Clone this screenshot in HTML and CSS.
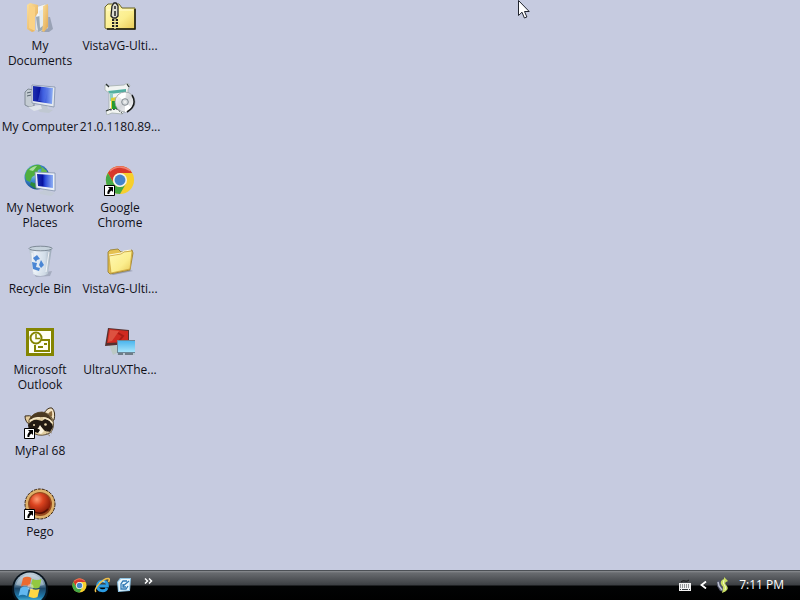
FILE: index.html
```
<!DOCTYPE html>
<html lang="en">
<head>
    <meta charset="UTF-8">
    <meta name="viewport" content="width=device-width, initial-scale=1.0">
    <title>Desktop</title>
    <link rel="stylesheet" href="styles.css">
</head>
<body>
    <!-- shared gradients and the shapes used more than once -->
    <svg class="defs" aria-hidden="true">
        <defs>
            <linearGradient id="folder" x1="0" y1="0" x2="1" y2="1">
                <stop offset="0" stop-color="#fff9b4"/>
                <stop offset="0.6" stop-color="#fbee8e"/>
                <stop offset="1" stop-color="#e8c955"/>
            </linearGradient>
            <linearGradient id="tan" x1="0" y1="0" x2="1" y2="1">
                <stop offset="0" stop-color="#fbe0a0"/>
                <stop offset="1" stop-color="#e2a850"/>
            </linearGradient>
            <linearGradient id="screen" x1="0" y1="0" x2="1" y2="0">
                <stop offset="0" stop-color="#1e2fae"/>
                <stop offset="0.35" stop-color="#0712a0"/>
                <stop offset="0.5" stop-color="#2a48d8"/>
                <stop offset="1" stop-color="#8fb0f4"/>
            </linearGradient>
            <radialGradient id="globe" cx="0.35" cy="0.3" r="0.75">
                <stop offset="0" stop-color="#b8e4fb"/>
                <stop offset="0.45" stop-color="#3f8fd0"/>
                <stop offset="1" stop-color="#0d3c86"/>
            </radialGradient>
            <linearGradient id="bin" x1="0" y1="0" x2="1" y2="0">
                <stop offset="0" stop-color="#b2c0cc"/>
                <stop offset="0.25" stop-color="#eef5fa"/>
                <stop offset="0.7" stop-color="#d3dfe9"/>
                <stop offset="1" stop-color="#8e9dab"/>
            </linearGradient>
            <linearGradient id="disc" x1="0" y1="0" x2="1" y2="1">
                <stop offset="0" stop-color="#ffffff"/>
                <stop offset="0.5" stop-color="#d4d6da"/>
                <stop offset="1" stop-color="#ffffff"/>
            </linearGradient>
            <radialGradient id="redball" cx="0.35" cy="0.3" r="0.75">
                <stop offset="0" stop-color="#ff9c74"/>
                <stop offset="0.4" stop-color="#dc4420"/>
                <stop offset="1" stop-color="#7e1604"/>
            </radialGradient>
            <linearGradient id="sky" x1="0" y1="0" x2="0" y2="1">
                <stop offset="0" stop-color="#4db6ee"/>
                <stop offset="1" stop-color="#a5e4fb"/>
            </linearGradient>
            <linearGradient id="orb" x1="0" y1="0" x2="0" y2="1">
                <stop offset="0" stop-color="#c3d0da"/>
                <stop offset="0.35" stop-color="#6f8ea6"/>
                <stop offset="0.5" stop-color="#1d4668"/>
                <stop offset="0.75" stop-color="#1f78aa"/>
                <stop offset="1" stop-color="#6fe0f6"/>
            </linearGradient>
            <symbol id="shortcut" viewBox="0 0 11 11">
                <path d="M0.5 0.5h10v10h-10z" fill="#fff" stroke="#000"/>
                <path d="M4 2h5v5L7.5 5.5C6 6.5 5.3 7.5 5.3 9H3.5C3 6.8 4 5.2 5.6 3.8z" fill="#000"/>
            </symbol>
            <symbol id="chrome" viewBox="0 0 32 32">
                <circle cx="16" cy="16" r="15" fill="#f7cf2c"/>
                <path d="M3 8.5A15 15 0 0 1 29 8.5H16A7.5 7.5 0 0 0 9.5 19.8z" fill="#d8392b"/>
                <path d="M3 8.5A15 15 0 0 0 16 31L22.5 19.7A7.5 7.5 0 0 1 9.5 19.7z" fill="#45a846"/>
                <path d="M5 6.5Q15 -2 27 6" fill="none" stroke="#f08272" stroke-width="1.5"/>
                <circle cx="16" cy="16" r="7.5" fill="#f3f3ee"/>
                <circle cx="16" cy="16" r="5.8" fill="#4584ca"/>
            </symbol>
        </defs>
    </svg>

    <main class="desktop">
        <ul class="column">
            <li>
                <a class="shortcut" href="#">
                    <svg class="icon" viewBox="0 0 32 32" aria-hidden="true">
                        <path d="M20 15h6l3 12-4 3h-8z" fill="#7c8798" opacity="0.6"/>
                        <path d="M12 5l9-3 3 2v22l-8 4-4-2z" fill="#f3f4f5" stroke="#b9bcc0" stroke-width="0.6"/>
                        <path d="M12 15l7-2v15l-5 2z" fill="#9caab6"/>
                        <path d="M15 9l5-2v16l-4 3z" fill="#e4ebef"/>
                        <path d="M3 3l3-2 8 2v8l-3 4v14l-3 1-5-3z" fill="url(#tan)"/>
                        <path d="M5 3l6 2v24l-6-3z" fill="#fad285"/>
                        <path d="M19 4l5-2v23l-4 5-2-1 1-7z" fill="url(#tan)"/>
                    </svg>
                    <span class="label">My Documents</span>
                </a>
            </li>
            <li>
                <a class="shortcut" href="#">
                    <svg class="icon" viewBox="0 0 32 32" aria-hidden="true">
                        <path d="M1 9l3-3 6 1v16l-5 1-4-2z" fill="#c4ccd3" stroke="#6f7a84" stroke-width="0.8"/>
                        <path d="M3 10l4-1M3 13l4-1" stroke="#58646e"/>
                        <path d="M4 24l18-3 3 3-15 4z" fill="#dfe4ea"/>
                        <path d="M16 20l7 1 1 5 5 1-4 3-9-1-2-2 4-1z" fill="#c0c8d2"/>
                        <path d="M8 2l23 2-1 20-22-4z" fill="#e4e9f0" stroke="#8391a8" stroke-width="0.8"/>
                        <path d="M9 3l20 2-1 16-19-3z" fill="url(#screen)"/>
                        <path d="M17 4l7 1-3 14-7-1z" fill="#5c7de8" opacity="0.45"/>
                    </svg>
                    <span class="label">My Computer</span>
                </a>
            </li>
            <li>
                <a class="shortcut" href="#">
                    <svg class="icon" viewBox="0 0 32 32" aria-hidden="true">
                        <circle cx="13" cy="13" r="12.5" fill="url(#globe)"/>
                        <path d="M3 6q6-6 13-5l2 3-4 2-1 4-5 3-2 5-4-2-1-5z" fill="#4fae3e"/>
                        <path d="M18 3l5 4-1 4-5-3z" fill="#68bc4a"/>
                        <path d="M7 18l6 2 2 4-3 1-6-4z" fill="#2c8b3a"/>
                        <path d="M5 6q4-4 8-4l-4 5z" fill="#d2f2c8" opacity="0.7"/>
                        <path d="M19 25l6 1 2 2 4 1-4 3-11-2-1-2 4-1z" fill="#c3cbd7"/>
                        <path d="M11 8l20 1v18l-19-3z" fill="#eaf0f8" stroke="#8190ab" stroke-width="0.8"/>
                        <path d="M13 10l16 1v13l-15-2z" fill="url(#screen)"/>
                    </svg>
                    <span class="label">My Network Places</span>
                </a>
            </li>
            <li>
                <a class="shortcut" href="#">
                    <svg class="icon" viewBox="0 0 32 32" aria-hidden="true">
                        <path d="M10 29l18-3-2 5-14 1z" fill="#7d8797" opacity="0.45"/>
                        <path d="M5 3l23-1-4 27q-8 4-15 0z" fill="url(#bin)" opacity="0.9"/>
                        <ellipse cx="16.5" cy="3.5" rx="11.5" ry="2.3" fill="#c6d2dc" stroke="#75818d" stroke-width="0.9"/>
                        <path d="M8 8l2 19M25 7l-3 20" stroke="#fff" opacity="0.8"/>
                        <path d="M9 13l4-3 3 4-3 1-1 2zM17 15l3 5-3 3-2-3zM8 17l5 1-1 4 4 1-1 3-6-2z" fill="#4a86d4"/>
                    </svg>
                    <span class="label">Recycle Bin</span>
                </a>
            </li>
            <li>
                <a class="shortcut" href="#">
                    <svg class="icon" viewBox="0 0 32 32" aria-hidden="true">
                        <path d="M2 2h28v28H2z" fill="#848500"/>
                        <path d="M5 5h22v22H5z" fill="#fffff4"/>
                        <path d="M14 14h11v11H11v-6" fill="none" stroke="#848500" stroke-width="2"/>
                        <path d="M14 21h5M20 18h3" stroke="#848500" stroke-width="2"/>
                        <circle cx="12" cy="12" r="5.5" fill="#fffff4" stroke="#848500" stroke-width="2"/>
                        <path d="M12 8v4.5h4" fill="none" stroke="#848500" stroke-width="1.5"/>
                    </svg>
                    <span class="label">Microsoft Outlook</span>
                </a>
            </li>
            <li>
                <a class="shortcut" href="#">
                    <svg class="icon" viewBox="0 0 32 32" aria-hidden="true">
                        <path d="M1 9q5-1 8 1l-3 8q-5-3-5-9z" fill="#e4cb9b" stroke="#3a2c1a"/>
                        <path d="M20 6q4-6 8-5 4 4 2 12l-4 1z" fill="#f3e3c2" stroke="#3a2c1a"/>
                        <path d="M24 7q2-3 4-3 1 4-1 7z" fill="#8b6b40"/>
                        <path d="M5 13q4-8 13-8 8 1 11 8 2 8-3 13-8 4-15 1-7-4-6-14z" fill="#e2cfa2" stroke="#4a3920" stroke-width="0.8"/>
                        <path d="M5 13q4-8 13-8 8 1 11 10-5-5-11-5-7 0-13 3z" fill="#4c3a22"/>
                        <path d="M4 18q4-6 10-5l4 1 3-2q7 1 8 8l-3 5-5-1-4-4-4 2-2 3-6-1z" fill="#221a13"/>
                        <path d="M16 18l4 6-3 3-5-2z" fill="#fbf3e0"/>
                        <path d="M6 14q5-4 10-3M19 11q6 0 9 5" fill="none" stroke="#f6e8c8" stroke-width="1.5"/>
                        <circle cx="21.5" cy="17.5" r="1.3" fill="#e9d6ab"/>
                        <circle cx="10" cy="18" r="1" fill="#e9d6ab"/>
                        <path d="M11 22q3-1 5 1l-2 3-3-1z" fill="#130f0b"/>
                        <path d="M22 24l6 2M22 26l4 3" stroke="#8a7a60" stroke-width="0.8"/>
                        <use href="#shortcut" x="0" y="21" width="11" height="11"/>
                    </svg>
                    <span class="label">MyPal 68</span>
                </a>
            </li>
            <li>
                <a class="shortcut" href="#">
                    <svg class="icon" viewBox="0 0 32 32" aria-hidden="true">
                        <circle cx="16" cy="16" r="15" fill="#deb16a" stroke="#35200f" stroke-dasharray="3 1"/>
                        <circle cx="16" cy="16" r="12" fill="#974a1e"/>
                        <circle cx="16" cy="15.5" r="10.5" fill="url(#redball)"/>
                        <path d="M8 22q8 7 16-1" fill="none" stroke="#561104" stroke-width="1.5"/>
                        <use href="#shortcut" x="0" y="21" width="11" height="11"/>
                    </svg>
                    <span class="label">Pego</span>
                </a>
            </li>
        </ul>

        <ul class="column">
            <li>
                <a class="shortcut" href="#">
                    <svg class="icon" viewBox="0 0 32 32" aria-hidden="true">
                        <path d="M1 26V5l3-3h11l3 4h13v21H3z" fill="url(#folder)" stroke="#6b6428"/>
                        <path d="M31 7v20H3" fill="none" stroke="#191908" stroke-width="1.5"/>
                        <path d="M3 8h4M14 8h15" stroke="#fffbd2"/>
                        <path d="M8 4l2-3h2l2 3v10l-2 2h-3l-2-2z" fill="#dcdcd2" stroke="#222" stroke-width="1.3"/>
                        <path d="M11 4v3M11 9v5" stroke="#222" stroke-width="1.5"/>
                        <path d="M11 17v10" stroke="#222" stroke-width="6" stroke-dasharray="2 1"/>
                        <path d="M11 17v10" stroke="#ece6a0" stroke-width="1.5"/>
                    </svg>
                    <span class="label">VistaVG-Ulti...</span>
                </a>
            </li>
            <li>
                <a class="shortcut" href="#">
                    <svg class="icon" viewBox="0 0 32 32" aria-hidden="true">
                        <path d="M1 2l5 1 14-1 3-2 3 2-2 5v19l-6 5-10-1-5 2-1-4 3-3V10l-4-3z" fill="#f1f4f2" stroke="#a3aeac" stroke-width="0.8"/>
                        <path d="M2 1l3 3M23 1l2 3M2 28l5-2" stroke="#2c3432" stroke-width="1.3"/>
                        <path d="M4 8l18-2v3L6 11z" fill="#52b0a2"/>
                        <path d="M6 10h3v8H6z" fill="#8ed0c4"/>
                        <path d="M7 15l6-1v12H7z" fill="#d9cf35"/>
                        <path d="M8 18h5v8H8z" fill="#249b30"/>
                        <path d="M6 27l7-1 6 5" fill="none" stroke="#3c4546" stroke-dasharray="2 1"/>
                        <circle cx="21" cy="19" r="10" fill="url(#disc)" stroke="#92989d" stroke-width="0.7"/>
                        <path d="M21 19l-7-6q4-4 8-3zM21 19l7 6q-3 4-7 4z" fill="#fff"/>
                        <path d="M28 12q6 10-5 17" fill="none" stroke="#17191b" stroke-width="1.5"/>
                        <circle cx="21" cy="19" r="3.3" fill="#d9dde0" stroke="#838a90"/>
                        <circle cx="21" cy="19" r="1.2" fill="#eee"/>
                    </svg>
                    <span class="label">21.0.1180.89...</span>
                </a>
            </li>
            <li>
                <a class="shortcut" href="#">
                    <svg class="icon" viewBox="0 0 32 32" aria-hidden="true">
                        <use href="#chrome" x="1" y="1" width="30" height="30"/>
                        <use href="#shortcut" x="0" y="21" width="11" height="11"/>
                    </svg>
                    <span class="label">Google Chrome</span>
                </a>
            </li>
            <li>
                <a class="shortcut" href="#">
                    <svg class="icon" viewBox="0 0 32 32" aria-hidden="true">
                        <path d="M7 29l19-4 3 1-20 4z" fill="#6c7282" opacity="0.5"/>
                        <path d="M4 7l2-2 8-1 3 3 11-2 1 3-3 17-20 4-2-2z" fill="#e5c151" stroke="#927a2c" stroke-width="0.8"/>
                        <path d="M5 11l12-2 3-2 8-1-2 18-19 4z" fill="url(#folder)" stroke="#c79f38" stroke-width="0.7"/>
                        <path d="M5 10l12-2 3-2 7-1" fill="none" stroke="#fffbdc"/>
                    </svg>
                    <span class="label">VistaVG-Ulti...</span>
                </a>
            </li>
            <li>
                <a class="shortcut" href="#">
                    <svg class="icon" viewBox="0 0 32 32" aria-hidden="true">
                        <path d="M5 19l10 1 2 5-8 4z" fill="#bcc9c5"/>
                        <path d="M4 2l21 2v14l-24 2z" fill="#55302e"/>
                        <path d="M5 3l19 2v11l-21 1z" fill="#cf2a20"/>
                        <path d="M6 4l9 1-7 10-4 1z" fill="#dd5140"/>
                        <path d="M14 7l5 3-4 5" fill="none" stroke="#a81c15" stroke-width="2"/>
                        <path d="M13 14h18v15H13z" fill="#6d8798"/>
                        <path d="M14 15h17v11H14z" fill="url(#sky)"/>
                        <path d="M13 27h18v2H13z" fill="#b9c7d2"/>
                        <path d="M14 28h5M21 28h8" stroke="#26333d"/>
                    </svg>
                    <span class="label">UltraUXThe...</span>
                </a>
            </li>
        </ul>

        <svg class="pointer" viewBox="0 0 12 19" aria-hidden="true">
            <path d="M0.5 0.5v15l3.5-3.3 2.4 5.8 2.5-1-2.4-5.5h4.7z" fill="#fff" stroke="#20242e"/>
        </svg>
    </main>

    <footer class="taskbar">
        <button class="start" type="button" aria-label="Start">
            <svg viewBox="0 0 36 36" aria-hidden="true">
                <circle cx="18" cy="18" r="18" fill="#07121c"/>
                <circle cx="18" cy="17.5" r="16" fill="url(#orb)"/>
                <path d="M4 14a14.5 14.5 0 0 1 28 0q-13 4-28 0z" fill="#eef4f8" opacity="0.35"/>
                <path d="M11 7q4-2.5 8.5 0L17.5 15.5q-4.5-2.5-8.5 0z" fill="#ec6a30"/>
                <path d="M20.5 8q4 2 9 0L27.5 16.5q-4.5 2-9-0.5z" fill="#93c840"/>
                <path d="M8.5 17q4-2.5 8.5 0L15 25q-4.5-2.5-8.5 0z" fill="#62b8f0"/>
                <path d="M18.5 17.5q4.5 2 9 0.5L25.5 26q-4.5 2-9-0.5z" fill="#fdd844"/>
                <circle cx="18.5" cy="16" r="3" fill="#fff" opacity="0.4"/>
            </svg>
        </button>

        <nav class="quick-launch" aria-label="Quick launch">
            <a href="#" aria-label="Google Chrome">
                <svg viewBox="0 0 16 16"><use href="#chrome" x="0" y="1" width="15" height="15"/></svg>
            </a>
            <a href="#" aria-label="Internet Explorer">
                <svg viewBox="0 0 16 16">
                    <path d="M4 9h9.5C14 2.5 4 2.5 3.5 8.5c-0.3 6.5 8 6.5 9.5 2.5" fill="none" stroke="#2b9ce4" stroke-width="2.8"/>
                    <path d="M5 6q3-3 6-1" fill="none" stroke="#a7e1fb"/>
                    <path d="M2 15C-1 12 9 1 14.5 1.5 16 2 15 4 14.5 5" fill="none" stroke="#f0c14a" stroke-width="1.5"/>
                </svg>
            </a>
            <a href="#" aria-label="Show desktop">
                <svg viewBox="0 0 16 16">
                    <path d="M4 1h11l-1 13-12 1-1-10z" fill="#8fc5e6"/>
                    <path d="M5 2h9l-1 11-10 1-1-9z" fill="#e9f6fc"/>
                    <path d="M11 4H7L5 7v5h5l2-3M7 9l6-5M7 7v3h3" fill="none" stroke="#3079b4" stroke-width="1.3"/>
                </svg>
            </a>
        </nav>
        <button class="more" type="button" aria-label="More shortcuts">
            <svg viewBox="0 0 9 6" aria-hidden="true">
                <path d="M1 0.5l2.5 2.5L1 5.5M5 0.5l2.5 2.5L5 5.5" fill="none" stroke="#fff" stroke-width="1.5"/>
            </svg>
        </button>

        <div class="tray">
            <button type="button" aria-label="Keyboard layout">
                <svg class="keyboard" viewBox="0 0 12 12" aria-hidden="true">
                    <path d="M2 3q2-2 4-1t4-1" fill="none" stroke="#111"/>
                    <path d="M0 4h12v8H0z" fill="#f2f2f2"/>
                    <path d="M1 6h10M1 8h10" stroke="#33383c" stroke-dasharray="1 1"/>
                    <path d="M1 10.5h1M3 10.5h6M10 10.5h1" stroke="#33383c"/>
                </svg>
            </button>
            <button type="button" aria-label="Show hidden icons">
                <svg class="expand" viewBox="0 0 7 8" aria-hidden="true">
                    <path d="M6 0.5L1.5 4L6 7.5" fill="none" stroke="#fff" stroke-width="1.8"/>
                </svg>
            </button>
            <button type="button" aria-label="Safely remove hardware">
                <svg class="remove" viewBox="0 0 14 16" aria-hidden="true">
                    <path d="M1 4l3-1 3 7 3 1-1 4-5-1-3-5z" fill="#4d5266"/>
                    <path d="M2 5l1 4 3 4" stroke="#bcc0d0" stroke-width="1.5" fill="none"/>
                    <path d="M8 0l4 4-2 1q-2 1 1 4 3 4-5 7 1-3 1-6-4-4-1-7l2-1z" fill="#c9df62"/>
                    <path d="M8 3q-2 3 1 6 1 2 0 4" stroke="#f5fbcb" fill="none"/>
                </svg>
            </button>
            <time class="clock" datetime="19:11">7:11 PM</time>
        </div>
    </footer>
</body>
</html>
```
FILE: styles.css
```
* {
    box-sizing: border-box;
}

body {
    margin: 0;
    min-height: 100vh;
    display: flex;
    flex-direction: column;
    background-color: #c6cbe0;
    color: #101018;
    font-family: "Open Sans", "Noto Sans", sans-serif;
    font-size: 12px;
    line-height: 15px;
}

button {
    display: flex;
    padding: 0;
    border: none;
    background: none;
    color: inherit;
    font: inherit;
    cursor: pointer;
}

a {
    color: inherit;
    text-decoration: none;
}

svg {
    display: block;
}

.defs {
    position: absolute;
    width: 0;
    height: 0;
}

.desktop {
    position: relative;
    flex: 1;
    display: flex;
    align-items: flex-start;
}

.column {
    display: grid;
    grid-template-columns: 80px;
    grid-auto-rows: 81px;
    margin: 0;
    padding: 0;
    list-style: none;
}

.shortcut {
    display: flex;
    flex-direction: column;
    align-items: center;
    gap: 4px;
    padding-top: 2px;
    text-align: center;
}

.icon {
    width: 32px;
    height: 32px;
}

/* mouse pointer lies over the desktop */
.pointer {
    position: absolute;
    top: 0;
    left: 65%;
    width: 12px;
    height: 19px;
    margin-left: -2px;
}

.taskbar {
    display: flex;
    align-items: center;
    height: 30px;
    padding: 0 16px 2px 12px;
    border-top: 1px solid #4c5055;
    background: linear-gradient(#8b8e92 0, #686b6f 2px, #3c3f43 14px, #020304 15px, #000 100%);
    color: #fff;
}

.start {
    align-self: flex-start;
    height: 29px;
    overflow: hidden;
}

.start svg {
    width: 36px;
    height: 36px;
}

.quick-launch {
    display: flex;
    gap: 6px;
    margin-left: 24px;
}

.quick-launch svg {
    width: 16px;
    height: 16px;
}

.more {
    align-self: flex-start;
    margin: 7px 0 0 12px;
}

.more svg {
    width: 9px;
    height: 6px;
}

.tray {
    display: flex;
    align-items: center;
    gap: 9px;
    margin-left: auto;
}

.keyboard {
    width: 12px;
    height: 12px;
}

.expand {
    width: 7px;
    height: 8px;
}

.remove {
    width: 14px;
    height: 16px;
}
```
